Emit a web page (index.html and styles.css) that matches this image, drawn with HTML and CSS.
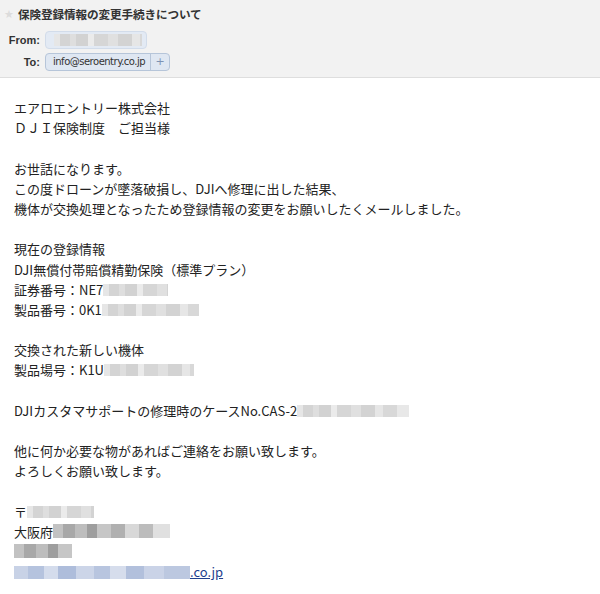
FILE: index.html
```html
<!DOCTYPE html>
<html lang="ja">
<head>
<meta charset="utf-8">
<link rel="stylesheet" href="styles.css">
</head>
<body>
<div class="header">
  <div class="subject"><span class="star">★</span><span class="subj-text">保険登録情報の変更手続きについて</span></div>
  <div class="field">
    <span class="label">From:</span>
    <span class="chip chip-from"><span class="blur b-from"></span></span>
  </div>
  <div class="field">
    <span class="label">To:</span>
    <span class="chip"><span class="chip-text">info@seroentry.co.jp</span><span class="chip-plus">+</span></span>
  </div>
</div>
<div class="body">
  <p>エアロエントリー株式会社</p>
  <p>ＤＪＩ保険制度　ご担当様</p>
  <p class="blank"></p>
  <p>お世話になります。</p>
  <p>この度ドローンが墜落破損し、DJIへ修理に出した結果、</p>
  <p>機体が交換処理となったため登録情報の変更をお願いしたくメールしました。</p>
  <p class="blank"></p>
  <p>現在の登録情報</p>
  <p>DJI無償付帯賠償精勤保険（標準プラン）</p>
  <p>証券番号：NE7<span class="blur w65"></span></p>
  <p>製品番号：0K1<span class="blur w97"></span></p>
  <p class="blank"></p>
  <p>交換された新しい機体</p>
  <p>製品場号：K1U<span class="blur w90"></span></p>
  <p class="blank"></p>
  <p>DJIカスタマサポートの修理時のケースNo.CAS-2<span class="blur w112"></span></p>
  <p class="blank"></p>
  <p>他に何か必要な物があればご連絡をお願い致します。</p>
  <p>よろしくお願い致します。</p>
  <p class="blank"></p>
  <p>〒<span class="blur w67"></span></p>
  <p>大阪府<span class="blur w117 dark"></span></p>
  <p><span class="blur w58 dark"></span></p>
  <p><a class="link" href="#"><span class="blur blue w176"></span>.co.jp</a></p>
</div>
</body>
</html>
```

FILE: styles.css
```css
html, body {
  margin: 0;
  padding: 0;
  background: #ffffff;
}
body {
  width: 600px;
  height: 594px;
  overflow: hidden;
  font-family: "Noto Sans CJK JP", "Noto Sans", sans-serif;
  color: #222222;
}
.header {
  background: #f2f2f2;
  border-bottom: 1px solid #dedede;
  height: 78px;
  box-sizing: border-box;
  padding-top: 5px;
  display: flex;
  flex-direction: column;
}
.subject {
  display: flex;
  align-items: center;
  height: 18px;
  margin-bottom: 7px;
}
.star {
  color: #dcdcdc;
  font-size: 11px;
  width: 18px;
  text-align: center;
  font-family: "DejaVu Sans", sans-serif;
}
.subj-text {
  font-weight: bold;
  font-size: 11.6px;
  color: #333333;
  letter-spacing: -0.1px;
}
.field {
  display: flex;
  align-items: center;
  height: 19px;
  margin-bottom: 3px;
}
.label {
  width: 45px;
  padding-right: 5px;
  box-sizing: border-box;
  text-align: right;
  font-family: "Liberation Sans", Arial, sans-serif;
  font-weight: bold;
  font-size: 11px;
  color: #333333;
}
.chip {
  display: inline-flex;
  align-items: center;
  height: 18px;
  box-sizing: border-box;
  background: #dfe7f2;
  border: 1px solid #b6c5d9;
  border-radius: 4px;
  font-family: "DejaVu Sans", sans-serif;
  font-size: 10px;
  color: #333333;
}
.chip-from {
  background: #e3eaf4;
  border-color: #d2dcea;
  width: 102px;
  padding-left: 8px;
}
.chip-text {
  padding: 0 5px 0 7px;
  letter-spacing: -0.5px;
}
.chip-plus {
  border-left: 1px solid #b6c5d9;
  height: 100%;
  width: 18px;
  display: flex;
  align-items: center;
  justify-content: center;
  color: #7d92b3;
  font-size: 11px;
}
.b-from {
  width: 88px;
  height: 10px;
  background: linear-gradient(90deg, #c3cdda 0 8px, #dbe2ec 8px 14px, #c8d1dd 14px 30px, #e0e6ef 30px 44px, #c0cad8 44px 62px, #d2d9e4 62px 78px, #c4cdd9 78px 88px);
}
.body {
  padding: 20px 0 0 14px;
  font-size: 13px;
  line-height: 20.2px;
}
.body p {
  margin: 0;
  height: 20.2px;
  white-space: nowrap;
}
.blur {
  display: inline-block;
  height: 12px;
  vertical-align: -1px;
  background: linear-gradient(90deg, #e6e6e6 0 6px, #d4d4d4 6px 16px, #dedede 16px 22px, #d2d2d2 22px 34px, #ebebeb 34px 40px, #d6d6d6 40px 54px, #e0e0e0 54px 64px, #d3d3d3 64px 78px, #e6e6e6 78px 86px, #d8d8d8 86px 100px, #e8e8e8 100px 120px);
}
.blur.dark {
  height: 14px;
  background: linear-gradient(90deg, #c2c2c2 0 10px, #a8a8a8 10px 22px, #bdbdbd 22px 34px, #9e9e9e 34px 44px, #c6c6c6 44px 58px, #b0b0b0 58px 72px, #d8d8d8 72px 86px, #bcbcbc 86px 100px, #e0e0e0 100px 120px);
}
.blur.blue {
  height: 13px;
  background: linear-gradient(90deg, #c8d2e6 0 14px, #b5c3de 14px 30px, #d4dcec 30px 44px, #aebddb 44px 62px, #ccd5e8 62px 80px, #b8c5df 80px 96px, #d6ddec 96px 112px, #b2c0dc 112px 130px, #cad3e7 130px 150px, #bcc8e0 150px 176px);
}
.w58 { width: 58px; }
.w65 { width: 65px; }
.w67 { width: 67px; }
.w90 { width: 90px; }
.w97 { width: 97px; }
.w112 { width: 112px; }
.w117 { width: 117px; }
.w176 { width: 176px; }
.link {
  color: #1f3f8f;
  text-decoration: underline;
}
.link .blur {
  vertical-align: -2px;
}
```
